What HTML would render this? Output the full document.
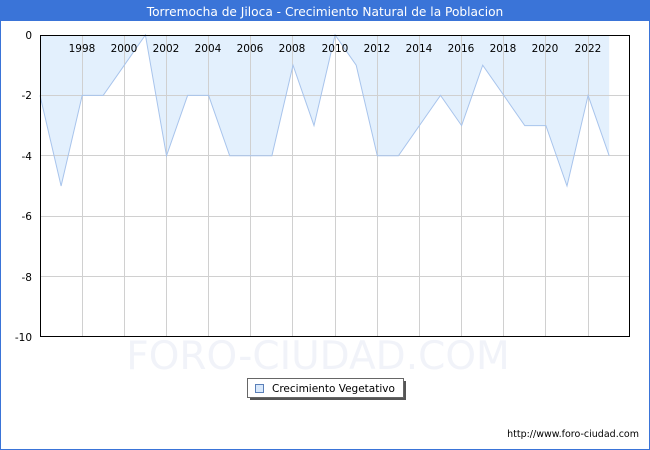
<!DOCTYPE html>
<html><head><style>
html,body{margin:0;padding:0;background:#fff;}
svg{display:block;font-family:"DejaVu Sans","Liberation Sans",sans-serif;}
</style></head><body>
<svg width="650" height="450" viewBox="0 0 650 450" xmlns="http://www.w3.org/2000/svg">
<rect x="0.5" y="0.5" width="649" height="449" fill="#fff" stroke="#3a74d8"/>
<rect x="0" y="0" width="650" height="21" fill="#3a74d8"/>
<text x="325" y="16" text-anchor="middle" fill="#fff" font-size="12.2">Torremocha de Jiloca - Crecimiento Natural de la Poblacion</text>
<text x="318" y="369" text-anchor="middle" fill="#f1f3f9" font-size="39">FORO-CIUDAD.COM</text>
<polygon fill="#e3f0fd" points="40,35 40,95.4 61.1,186 82.2,95.4 103.2,95.4 124.3,65.2 145.4,35 166.5,155.8 187.6,95.4 208.6,95.4 229.7,155.8 250.8,155.8 271.9,155.8 293,65.2 314,125.6 335.1,35 356.2,65.2 377.3,155.8 398.4,155.8 419.4,125.6 440.5,95.4 461.6,125.6 482.7,65.2 503.8,95.4 524.8,125.6 545.9,125.6 567,186 588.1,95.4 609.2,155.8 609.2,35"/>
<g stroke="#d0d0d0" stroke-width="1">
<line x1="40" y1="95.5" x2="630" y2="95.5"/><line x1="40" y1="155.5" x2="630" y2="155.5"/><line x1="40" y1="216.5" x2="630" y2="216.5"/><line x1="40" y1="276.5" x2="630" y2="276.5"/>
<line x1="82.5" y1="35" x2="82.5" y2="337"/><line x1="124.5" y1="35" x2="124.5" y2="337"/><line x1="166.5" y1="35" x2="166.5" y2="337"/><line x1="208.5" y1="35" x2="208.5" y2="337"/><line x1="250.5" y1="35" x2="250.5" y2="337"/><line x1="292.5" y1="35" x2="292.5" y2="337"/><line x1="335.5" y1="35" x2="335.5" y2="337"/><line x1="377.5" y1="35" x2="377.5" y2="337"/><line x1="419.5" y1="35" x2="419.5" y2="337"/><line x1="461.5" y1="35" x2="461.5" y2="337"/><line x1="503.5" y1="35" x2="503.5" y2="337"/><line x1="545.5" y1="35" x2="545.5" y2="337"/><line x1="588.5" y1="35" x2="588.5" y2="337"/>
</g>
<polyline fill="none" stroke="#a8c4ec" stroke-width="1" points="40,95.4 61.1,186 82.2,95.4 103.2,95.4 124.3,65.2 145.4,35 166.5,155.8 187.6,95.4 208.6,95.4 229.7,155.8 250.8,155.8 271.9,155.8 293,65.2 314,125.6 335.1,35 356.2,65.2 377.3,155.8 398.4,155.8 419.4,125.6 440.5,95.4 461.6,125.6 482.7,65.2 503.8,95.4 524.8,125.6 545.9,125.6 567,186 588.1,95.4 609.2,155.8"/>
<rect x="40.5" y="35.5" width="589" height="301" fill="none" stroke="#000"/>
<g font-size="10.5" fill="#000" text-anchor="middle">
<text x="82" y="52">1998</text><text x="124" y="52">2000</text><text x="166" y="52">2002</text><text x="208" y="52">2004</text><text x="250" y="52">2006</text><text x="292" y="52">2008</text><text x="335" y="52">2010</text><text x="377" y="52">2012</text><text x="419" y="52">2014</text><text x="461" y="52">2016</text><text x="503" y="52">2018</text><text x="545" y="52">2020</text><text x="588" y="52">2022</text>
</g>
<g font-size="10.5" fill="#000" text-anchor="end">
<text x="32" y="39">0</text><text x="32" y="99">-2</text><text x="32" y="160">-4</text><text x="32" y="220">-6</text><text x="32" y="281">-8</text><text x="32" y="341">-10</text>
</g>
<rect x="250" y="381" width="156" height="19" fill="#555"/>
<rect x="247.5" y="378.5" width="156" height="19" fill="#fff" stroke="#666"/>
<rect x="255.5" y="384.5" width="8" height="8" fill="#d8e8fb" stroke="#5a7fb8"/>
<text x="272" y="392" font-size="10.5" fill="#000">Crecimiento Vegetativo</text>
<text x="639" y="437" text-anchor="end" font-size="9.5" fill="#000">http://www.foro-ciudad.com</text>
</svg>
</body></html>
